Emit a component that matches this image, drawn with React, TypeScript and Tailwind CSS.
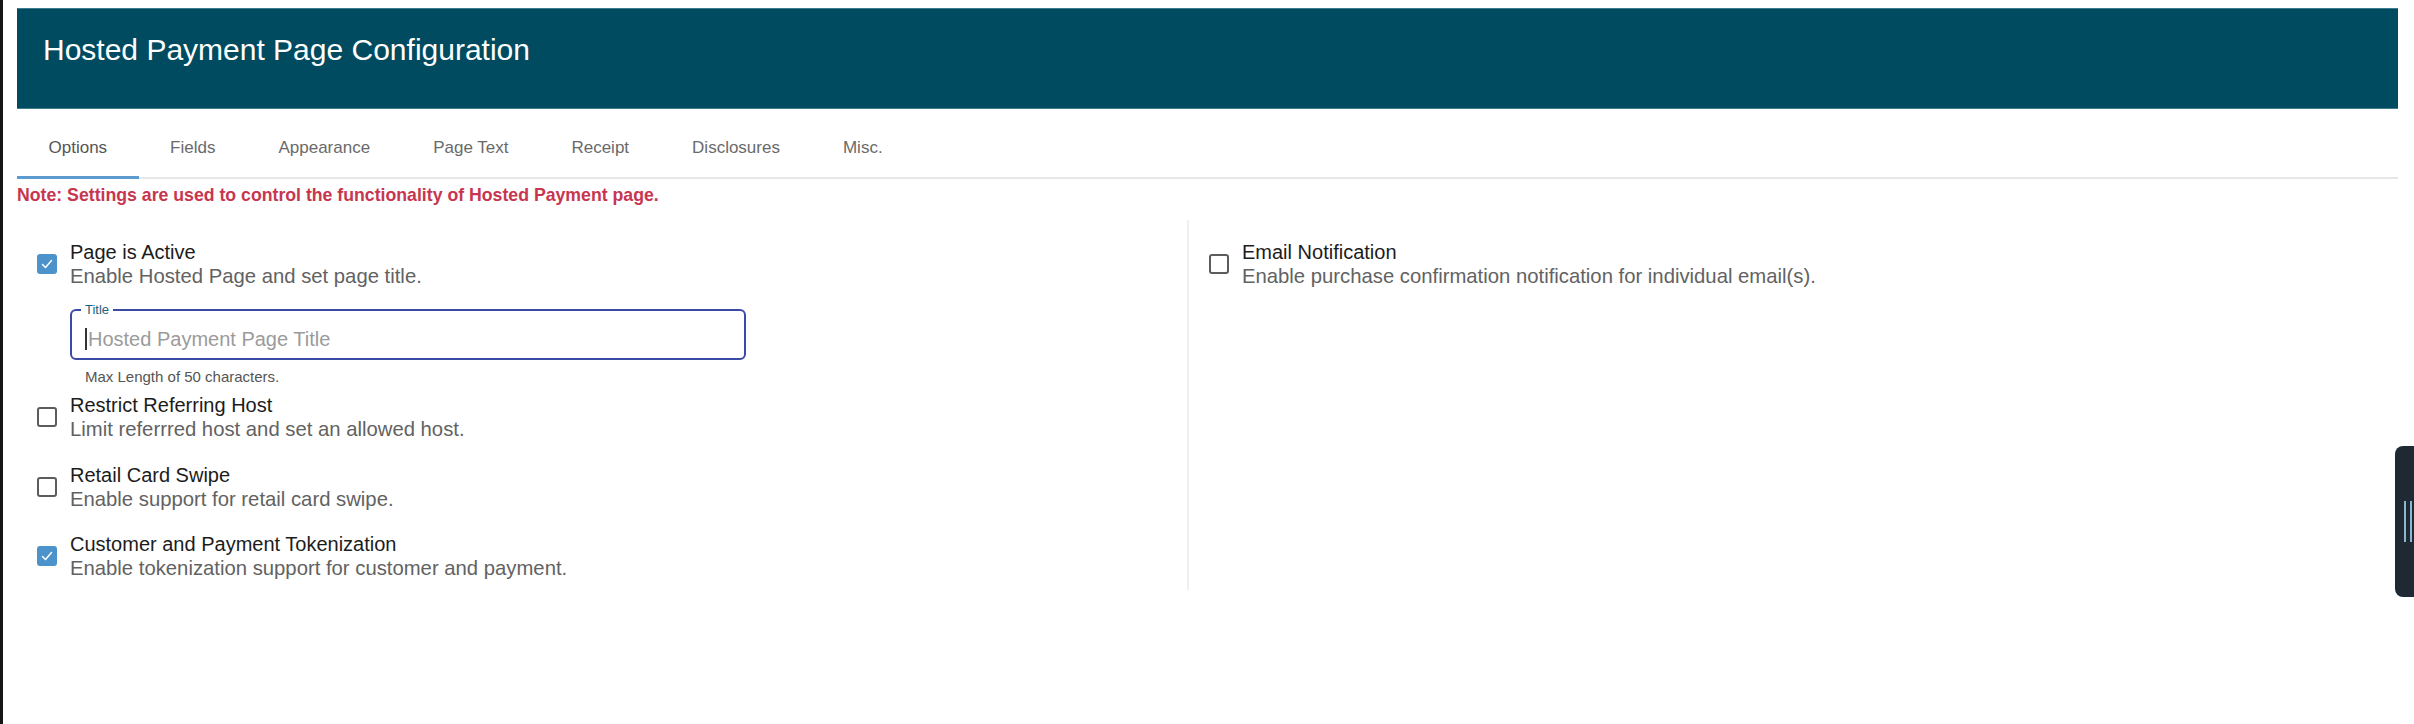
import type { ReactNode } from 'react'

const tabs = ['Options', 'Fields', 'Appearance', 'Page Text', 'Receipt', 'Disclosures', 'Misc.']

function Checkbox({ checked }: { checked: boolean }) {
  if (checked) {
    return (
      <span className="flex h-[20px] w-[20px] shrink-0 items-center justify-center rounded-[3px] bg-[#4d93cb]">
        <svg width="14" height="14" viewBox="0 0 14 14" fill="none">
          <polyline points="2.5,7.5 5.5,10.5 11.5,3.5" stroke="#fff" strokeWidth="1.5" strokeLinecap="round" strokeLinejoin="round" />
        </svg>
      </span>
    )
  }
  return <span className="block h-[20px] w-[20px] shrink-0 rounded-[3px] border-2 border-[#5c5c5c] bg-white" />
}

function Option({ checked, label, desc }: { checked: boolean; label: string; desc: string }) {
  return (
    <div className="flex items-center gap-[13px]">
      <Checkbox checked={checked} />
      <div className="leading-[24px]">
        <div className="text-[20px] text-[#1c1c1c]">{label}</div>
        <div className="text-[20.3px] text-[#626262]">{desc}</div>
      </div>
    </div>
  )
}

function Column({ children, className = '' }: { children: ReactNode; className?: string }) {
  return <div className={`pl-[20px] pt-[20px] pb-[10px] ${className}`}>{children}</div>
}

export default function App() {
  return (
    <div className="flex h-[724px] w-full overflow-hidden bg-white font-['Liberation_Sans',Arial,sans-serif]">
      <div className="w-[3px] shrink-0 bg-[#161616]" />
      <div className="relative flex-1 pl-[14px] pr-[16px] pt-[8px]">
        <div className="h-[101px] border-y border-[#3e7c8d] bg-[#004b5f] pl-[26px] pt-[23px]">
          <h1 className="text-[30px] leading-[36px] text-white">Hosted Payment Page Configuration</h1>
        </div>

        <div className="flex border-b-2 border-[#e7e7e7]">
          {tabs.map((t, i) => (
            <div
              key={t}
              className={`-mb-[2px] border-b-[3px] px-[31.5px] pt-[29px] pb-[18px] text-[17px] leading-[20px] ${
                i === 0 ? 'border-[#5b9bd0] text-[#555]' : 'border-transparent text-[#6a6a6a]'
              }`}
            >
              {t}
            </div>
          ))}
        </div>

        <p className="mt-[6px] text-[17.7px] font-bold leading-[20px] text-[#c7364f]">
          Note: Settings are used to control the functionality of Hosted Payment page.
        </p>

        <div className="mt-[15px] grid grid-cols-[1172px_1fr]">
          <Column className="border-r-2 border-[#efefef]">
            <Option checked label="Page is Active" desc="Enable Hosted Page and set page title." />
            <div className="ml-[33px] mt-[21px]">
              <div className="relative h-[51px] w-[676px] rounded-[6px] border-2 border-[#3a4aa5] pl-[13px] pt-[16px]">
                <span className="absolute -top-[9px] left-[9px] bg-white px-[4px] text-[13px] leading-[16px] text-[#1f617b]">
                  Title
                </span>
                <div className="flex items-center text-[20px] leading-[24px] text-[#9b9b9b]">
                  <span className="mr-[1px] h-[22px] w-[2px] bg-[#333]" />
                  Hosted Payment Page Title
                </div>
              </div>
              <div className="mt-[8px] pl-[15px] text-[15px] leading-[18px] text-[#555]">Max Length of 50 characters.</div>
            </div>
            <div className="mt-[7px]">
              <Option checked={false} label="Restrict Referring Host" desc="Limit referrred host and set an allowed host." />
            </div>
            <div className="mt-[22px]">
              <Option checked={false} label="Retail Card Swipe" desc="Enable support for retail card swipe." />
            </div>
            <div className="mt-[21px]">
              <Option checked label="Customer and Payment Tokenization" desc="Enable tokenization support for customer and payment." />
            </div>
          </Column>
          <Column>
            <Option
              checked={false}
              label="Email Notification"
              desc="Enable purchase confirmation notification for individual email(s)."
            />
          </Column>
        </div>
      </div>

      <div className="absolute right-0 top-[446px] flex h-[151px] w-[19px] items-center gap-[4px] rounded-l-[8px] bg-[#1f2933] pl-[9px]">
        <span className="h-[41px] w-[2px] bg-[#8bb7cf]" />
        <span className="h-[41px] w-[2px] bg-[#8bb7cf]" />
      </div>
    </div>
  )
}
